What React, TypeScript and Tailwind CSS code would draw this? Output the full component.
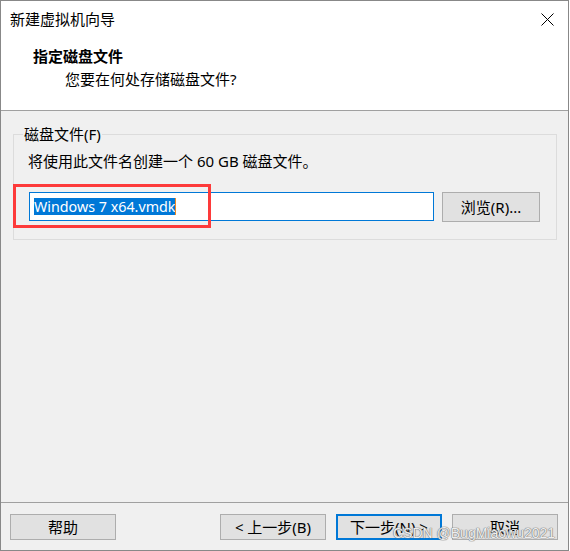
import React from "react";

const font = "font-['Noto_Sans','Noto_Sans_CJK_SC',sans-serif]";

const WinButton = ({ label, primary }: { label: string; primary?: boolean }) => (
  <div
    className={`w-[106px] h-[26px] flex items-center justify-center bg-[#e1e1e1] text-[15px] leading-[20px] text-black ${
      primary ? "border-2 border-[#0078d7]" : "border border-[#adadad]"
    }`}
  >
    {label}
  </div>
);

const App = () => {
  return (
    <div className={`w-[569px] h-[551px] border border-[#888888] flex flex-col bg-white ${font}`}>
      {/* TITLE BAR */}
      <div className="h-[30px] shrink-0 flex items-start justify-between">
        <span className="ml-[9px] mt-[8px] text-[15px] leading-[20px] text-black">
          新建虚拟机向导
        </span>
        <svg className="mt-[12px] mr-[14px]" width="13" height="13" viewBox="0 0 13 13">
          <path d="M0.5 0.5 L12.5 12.5 M12.5 0.5 L0.5 12.5" stroke="#000" strokeWidth="1" fill="none" />
        </svg>
      </div>

      {/* HEADER */}
      <div className="h-[80px] shrink-0 border-b border-[#a0a0a0] flex flex-col">
        <h3 className="ml-[32px] mt-[15px] text-[15px] leading-[20px] font-bold text-black">
          指定磁盘文件
        </h3>
        <p className="ml-[64px] mt-[3px] text-[15px] leading-[20px] text-black">
          您要在何处存储磁盘文件?
        </p>
      </div>

      {/* BODY */}
      <div className="relative h-[392px] shrink-0 bg-[#f0f0f0] border-b border-[#a0a0a0]">
        <fieldset className="ml-[12px] mt-[13px] w-[544px] border border-[#dcdcdc] pl-[9px] pb-[17px]">
          <legend className="px-[1px] text-[15px] leading-[20px] text-black">磁盘文件(F)</legend>
          <p className="ml-[5px] mt-[7px] text-[15px] leading-[20px] text-black">
            将使用此文件名创建一个 60 GB 磁盘文件。
          </p>
          <div className="mt-[21px] ml-[6px] flex items-start gap-[8px]">
            <div className="w-[405px] h-[29px] bg-white border border-[#0078d7] flex items-center pl-[4px]">
              <span className="bg-[#0078d7] text-white text-[14.3px] leading-[17px] whitespace-nowrap">
                Windows 7 x64.vmdk
              </span>
              <span className="w-[1px] h-[17px] bg-[#f08a24]" />
            </div>
            <div className="w-[98px] h-[30px] bg-[#e1e1e1] border border-[#adadad] flex items-center justify-center text-[15px] leading-[20px] text-black">
              浏览(R)...
            </div>
          </div>
        </fieldset>

        {/* RED HIGHLIGHT */}
        <div className="absolute left-[12px] top-[73px] w-[198px] h-[44px] border-[3px] border-[#fd3a3a]" />
      </div>

      {/* FOOTER */}
      <div className="relative flex-1 bg-[#f0f0f0] flex items-start justify-between pt-[11px] pl-[9px] pr-[10px]">
        <WinButton label="帮助" />
        <div className="flex gap-[10px]">
          <WinButton label="< 上一步(B)" />
          <WinButton label="下一步(N) >" primary />
          <WinButton label="取消" />
        </div>
        <span className="absolute left-[392px] top-[20px] whitespace-nowrap text-[14px] leading-[20px] font-['Liberation_Sans',sans-serif] text-[#eeeeee] [text-shadow:0_0_1px_#7a7a7a,0_0_1px_#7a7a7a,0_0_1px_#7a7a7a]">
          CSDN @BugMiaowu2021
        </span>
      </div>
    </div>
  );
};

export default App;
